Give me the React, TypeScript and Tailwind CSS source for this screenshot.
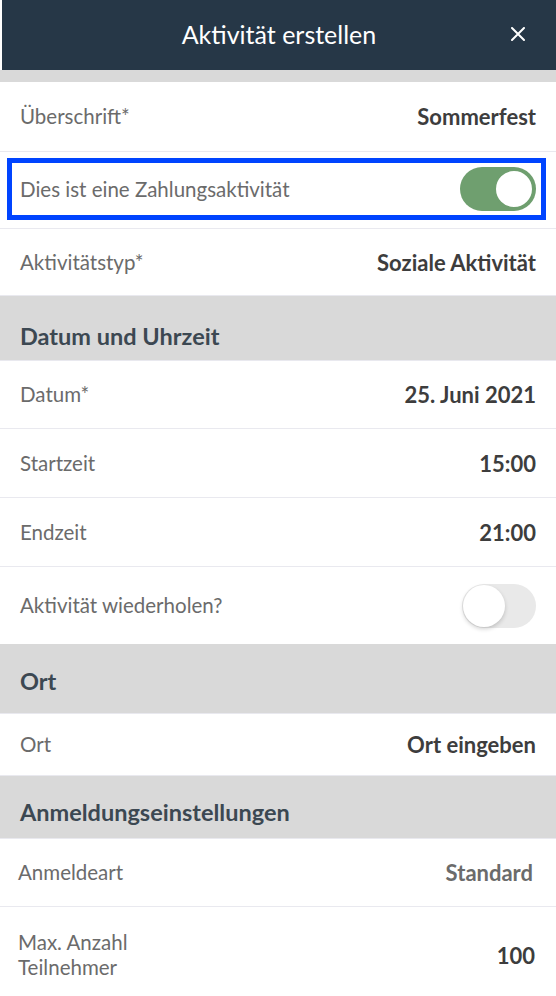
import React from 'react';

const font = { fontFamily: 'Lato, "Open Sans", sans-serif' };

const Toggle = ({ on }: { on: boolean }) =>
  on ? (
    <div className="w-[76px] h-[44px] rounded-full bg-[#6f9f6f] flex items-center justify-end pr-[2px]">
      <div className="w-[40px] h-[40px] rounded-full bg-white border-2 border-[#6f9f6f]" />
    </div>
  ) : (
    <div className="w-[74px] h-[44px] rounded-full bg-[#e9e9e9] flex items-center pl-[1px]">
      <div className="w-[42px] h-[42px] rounded-full bg-white shadow-[0_2px_4px_rgba(0,0,0,0.18)]" />
    </div>
  );

const Row = ({ label, value, h = 'h-[69px]' }: { label: React.ReactNode; value: React.ReactNode; h?: string }) => (
  <div className={`${h} flex items-center justify-between px-5 bg-white border-b border-[#e9e9ef]`}>
    <span className="text-[20.5px] text-[#6b6b6b]">{label}</span>
    <span className="text-[22px] font-bold text-[#3d3d3d]">{value}</span>
  </div>
);

const Section = ({ title, h, pb = 'pb-[10px]' }: { title: string; h: string; pb?: string }) => (
  <div className={`${h} flex items-end ${pb} px-5 bg-[#d9d9d9] border-b border-[#e9e9ef]`}>
    <span className="text-[23.5px] leading-[30px] font-bold text-[#3c4852]">{title}</span>
  </div>
);

export default function App() {
  return (
    <div className="w-[556px] h-[996px] overflow-hidden bg-white" style={font}>
      <div className="h-[70px] bg-[#263747] relative flex items-center justify-center ml-[2px]">
        <span className="text-white text-[25px]">Aktivität erstellen</span>
        <svg className="absolute right-[31px] top-[27px]" width="14" height="14" viewBox="0 0 14 14">
          <path d="M1 1L13 13M13 1L1 13" stroke="white" strokeWidth="2" strokeLinecap="round" />
        </svg>
      </div>
      <div className="h-[12px] bg-[#d9d9d9]" />
      <Row label="Überschrift*" value="Sommerfest" h="h-[70px]" />
      <div className="h-[77px] flex items-start pt-[6px] pl-[7px] pr-[10px] border-b border-[#e9e9ef]">
        <div className="flex-1 h-[62px] border-[5px] border-[#0044ff] flex items-center justify-between pl-[8px] pr-[5px]">
          <span className="text-[20.5px] text-[#6b6b6b]">Dies ist eine Zahlungsaktivität</span>
          <Toggle on />
        </div>
      </div>
      <Row label="Aktivitätstyp*" value="Soziale Aktivität" h="h-[67px]" />
      <Section title="Datum und Uhrzeit" h="h-[65px]" pb="pb-[9px]" />
      <Row label="Datum*" value="25. Juni 2021" h="h-[68px]" />
      <Row label="Startzeit" value="15:00" />
      <Row label="Endzeit" value="21:00" />
      <div className="h-[77px] flex items-center justify-between px-5 bg-white">
        <span className="text-[20.5px] text-[#6b6b6b]">Aktivität wiederholen?</span>
        <Toggle on={false} />
      </div>
      <Section title="Ort" h="h-[70px]" pb="pb-[17px]" />
      <Row label="Ort" value="Ort eingeben" h="h-[62px]" />
      <Section title="Anmeldungseinstellungen" h="h-[63px]" pb="pb-[11px]" />
      <div className="h-[68px] flex items-center justify-between pl-[18px] pr-[23px] bg-white border-b border-[#e9e9ef]">
        <span className="text-[20.5px] text-[#6b6b6b]">Anmeldeart</span>
        <span className="text-[22px] font-bold text-[#6b6b6b]">Standard</span>
      </div>
      <div className="h-[96px] flex items-center justify-between pl-[18px] pr-[21px] bg-white">
        <span className="text-[20.5px] leading-[25px] text-[#6b6b6b]">Max. Anzahl<br />Teilnehmer</span>
        <span className="text-[22px] font-bold text-[#3d3d3d]">100</span>
      </div>
    </div>
  );
}
